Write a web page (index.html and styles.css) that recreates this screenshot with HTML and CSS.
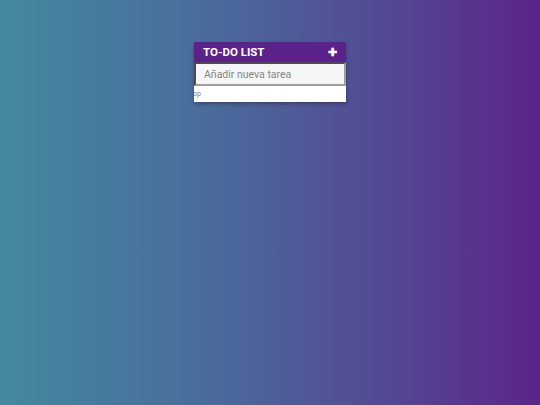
FILE: index.html
```html
<!DOCTYPE html>
<html lang="es">
<head>
<meta charset="utf-8">
<title>To-Do List</title>
<link rel="stylesheet" href="styles.css">
</head>
<body>
<div class="page">
  <div class="card">
    <div class="card-header">
      <span class="title">TO-DO LIST</span>
      <span class="add">&#x271A;</span>
    </div>
    <input class="new-task" type="text" placeholder="Añadir nueva tarea">
    <div class="card-footer"><span class="footer-text">op</span></div>
  </div>
</div>
</body>
</html>
```
FILE: styles.css
```css
html, body {
  margin: 0;
  padding: 0;
  height: 100%;
}
body {
  font-family: Roboto, "Liberation Sans", sans-serif;
  background: linear-gradient(to right, #43899f 0%, #4b6a9b 40%, #534a95 70%, #5b2489 100%);
}
.page {
  display: flex;
  justify-content: center;
  padding-top: 42px;
}
.card {
  width: 152px;
  background: #fff;
  box-shadow: 0 2px 4px rgba(0, 0, 0, 0.3);
  display: flex;
  flex-direction: column;
}
.card-header {
  height: 20px;
  background: #5b2389;
  color: #fff;
  display: flex;
  align-items: center;
  justify-content: space-between;
  padding: 0 9px;
}
.title {
  font-size: 11.5px;
  font-weight: bold;
}
.add {
  font-size: 11px;
  font-weight: bold;
}
.new-task {
  box-sizing: border-box;
  width: 152px;
  height: 24px;
  margin: 0;
  padding: 0 8px;
  border: 2px inset #a0a0a0;
  background: #f6f6f6;
  font-family: Roboto, "Liberation Sans", sans-serif;
  font-size: 10.5px;
  color: #555;
}
.new-task::placeholder {
  color: #858585;
}
.card-footer {
  height: 16px;
  display: flex;
  align-items: center;
  overflow: hidden;
}
.footer-text {
  font-size: 7px;
  color: #808080;
  margin-left: -1px;
}
```
